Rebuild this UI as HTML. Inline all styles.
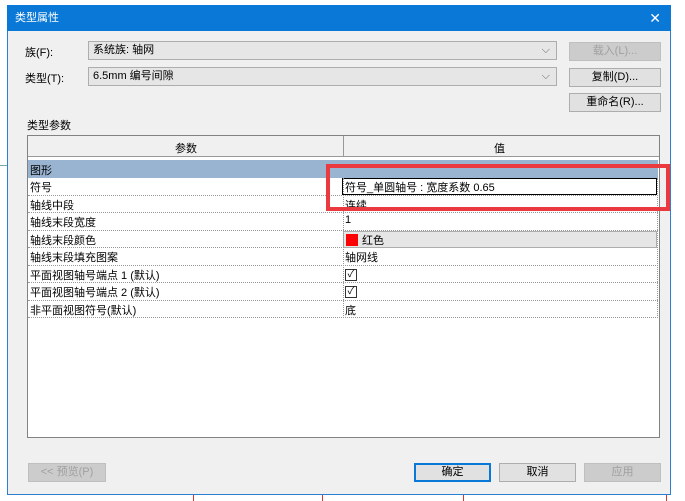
<!DOCTYPE html>
<html><head><meta charset="utf-8"><style>
*{box-sizing:border-box;margin:0;padding:0}
body{width:685px;height:501px;background:#fff;position:relative;overflow:hidden;font-family:"Liberation Sans","Noto Sans CJK SC",sans-serif;font-size:11px;color:#000}
.a{position:absolute}
.dlg{left:7px;top:5px;width:664px;height:490px;background:#f0f0f0;border:1px solid #2b7fd4}
.title{left:7px;top:5px;width:664px;height:26px;background:#0a78d7;color:#fff;font-size:11px;line-height:26px;padding-left:8px}
.combo{background:#e6e6e6;border:1px solid #adadad;height:19px;line-height:17px;padding-left:4px}
.btn{background:#e1e1e1;border:1px solid #adadad;height:19px;line-height:17px;text-align:center}
.dis{color:#a0a0a0;background:#cccccc;border-color:#bfbfbf}
.row{left:28px;width:630px;height:17.5px;border-bottom:1px dotted #999;background:#fff}
.row span{position:absolute;left:2px;top:1px}
.row b{font-weight:normal;position:absolute;left:317px;top:1px}
.vl{left:343px;border-left:1px dotted #999}
</style></head><body>
<div class="a" style="left:0;top:165px;width:8px;height:1px;background:#7aa"></div>
<div class="a" style="left:193px;top:494px;width:1px;height:7px;background:#d33"></div>
<div class="a" style="left:322px;top:494px;width:1px;height:7px;background:#d33"></div>
<div class="a" style="left:463px;top:494px;width:1px;height:7px;background:#d33"></div>
<div class="a" style="left:666px;top:494px;width:1px;height:7px;background:#d33"></div>
<div class="a dlg"></div>
<div class="a title">类型属性<span style="position:absolute;right:10px;font-size:14px">✕</span></div>
<div class="a" style="left:25px;top:44px">族(F):</div>
<div class="a combo" style="left:88px;top:41px;width:469px">系统族: 轴网<span style="position:absolute;right:6px;color:#666">⌵</span></div>
<div class="a btn dis" style="left:569px;top:42px;width:92px">载入(L)...</div>
<div class="a" style="left:25px;top:70px">类型(T):</div>
<div class="a combo" style="left:88px;top:67px;width:469px">6.5mm 编号间隙<span style="position:absolute;right:6px;color:#666">⌵</span></div>
<div class="a btn" style="left:569px;top:68px;width:92px">复制(D)...</div>
<div class="a btn" style="left:569px;top:93px;width:92px">重命名(R)...</div>
<div class="a" style="left:27px;top:117px">类型参数</div>
<div class="a" style="left:27px;top:135px;width:633px;height:303px;background:#fff;border:1px solid #828282"></div>
<div class="a" style="left:28px;top:136px;width:631px;height:21px;background:#f0f0f0;border-bottom:1px solid #999"></div>
<div class="a" style="left:343px;top:136px;width:1px;height:21px;background:#999"></div>
<div class="a" style="left:175px;top:140px">参数</div>
<div class="a" style="left:494px;top:140px">值</div>
<div class="a" style="left:28px;top:160px;width:630px;height:18px;background:#99b4d1"><span style="position:absolute;left:2px;top:2px">图形</span></div>
<div class="a row" style="top:178px"><span>符号</span></div>
<div class="a" style="left:342px;top:178px;width:315px;height:17px;border:1px solid #000;background:#fff;padding:0 2px">符号_单圆轴号 : 宽度系数 0.65</div>
<div class="a row" style="top:195.5px"><span>轴线中段</span><b>连续</b></div>
<div class="a row" style="top:213px"><span>轴线末段宽度</span><b>1</b></div>
<div class="a row" style="top:230.5px"><span>轴线末段颜色</span></div>
<div class="a" style="left:343px;top:231px;width:314px;height:17px;background:#e6e6e6;border:1px solid #adadad"><div style="position:absolute;left:2px;top:2px;width:12px;height:12px;background:#f00"></div><span style="position:absolute;left:18px;top:0px">红色</span></div>
<div class="a row" style="top:248px"><span>轴线末段填充图案</span><b>轴网线</b></div>
<div class="a row" style="top:265.5px"><span>平面视图轴号端点 1 (默认)</span><b style="top:3px;width:12px;height:12px;border:1px solid #333;font-size:10px;line-height:10px;text-align:center">✓</b></div>
<div class="a row" style="top:283px"><span>平面视图轴号端点 2 (默认)</span><b style="top:3px;width:12px;height:12px;border:1px solid #333;font-size:10px;line-height:10px;text-align:center">✓</b></div>
<div class="a row" style="top:300.5px"><span>非平面视图符号(默认)</span><b>底</b></div>
<div class="a vl" style="top:178px;height:140px"></div>
<div class="a" style="left:657px;top:178px;height:140px;border-left:1px dotted #999"></div>
<div class="a" style="left:326px;top:164px;width:344px;height:47px;border:4px solid #ea3a3f"></div>
<div class="a btn dis" style="left:28px;top:463px;width:78px">&lt;&lt; 预览(P)</div>
<div class="a btn" style="left:414px;top:463px;width:77px;border:1px solid #0a78d7;box-shadow:inset 0 0 0 1px #0a78d7">确定</div>
<div class="a btn" style="left:499px;top:463px;width:77px">取消</div>
<div class="a btn dis" style="left:584px;top:463px;width:77px">应用</div>
</body></html>
